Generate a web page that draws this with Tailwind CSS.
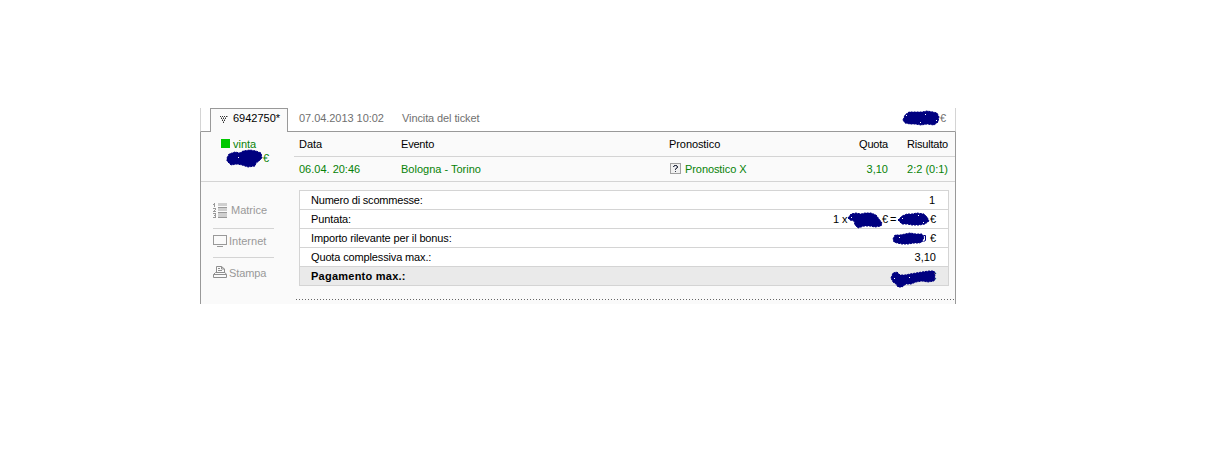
<!DOCTYPE html>
<html lang="it">
<head>
<meta charset="utf-8">
<title>Ticket</title>
<script src="https://cdn.jsdelivr.net/npm/@tailwindcss/browser@4"></script>
</head>
<body class="bg-white font-['Liberation_Sans',Arial,sans-serif] text-[11px] leading-[20px] text-black whitespace-nowrap">
<main class="relative ml-[200px] pt-[108px] w-[756px]">
  <!-- Ticket header -->
  <header class="flex h-[24px]">
    <div class="w-[10px] border-l border-l-[#d4d4d4] border-b border-b-[#999]"></div>
    <div class="flex w-[78px] border border-b-0 border-[#999] bg-[#fafafa] leading-[18px]">
      <svg class="ml-[9px] mt-[7px]" width="8" height="8" shape-rendering="crispEdges" fill="#333"><path d="M0 0h1v1H0zM2 0h1v1H2zM4 0h1v1H4zM6 0h1v1H6zM1 2h1v1H1zM3 2h1v1H3zM5 2h1v1H5zM2 4h1v1H2zM4 4h1v1H4zM3 6h1v1H3z"/><path fill="#999" d="M1 1h1v1H1zM3 1h1v1H3zM5 1h1v1H5zM2 3h1v1H2zM4 3h1v1H4zM3 5h1v1H3zM7 0h1v1H7z"/></svg>
      <span class="ml-[5px]">6942750*</span>
    </div>
    <div class="flex flex-1 border-b border-b-[#999] border-r border-r-[#d4d4d4] text-[#707070]">
      <span class="w-[102px] pl-[11px] tracking-[-0.05px]">07.04.2013 10:02</span>
      <span class="flex-1 pl-[12px] tracking-[-0.1px]">Vincita del ticket</span>
      <span class="pr-[9px]">€</span>
    </div>
  </header>

  <section class="h-[172px] border-x border-[#999] bg-[#fafafa]">
    <div class="flex h-[50px] border-b border-[#d4d4d4] text-[#078207]">
      <div class="w-[93px]">
        <div class="flex h-[24px] pt-[2px] pl-[20px]"><i class="mt-[5px] mr-[3px] block h-[9px] w-[9px] bg-[#00c800]"></i>vinta</div>
        <div class="-mt-[8px] pl-[62px]">€</div>
      </div>
      <div class="flex-1">
        <div class="grid h-[25px] grid-cols-[106px_268px_130px_90px_60px] border-b border-[#d4d4d4] pt-[2px] text-black">
          <span class="pl-[5px]">Data</span><span class="pl-px tracking-[-0.2px]">Evento</span><span class="pl-px tracking-[-0.08px]">Pronostico</span><span class="text-right tracking-[-0.2px]">Quota</span><span class="text-right tracking-[-0.2px]">Risultato</span>
        </div>
        <div class="grid grid-cols-[106px_268px_130px_90px_60px] pt-[2px]">
          <span class="pl-[5px]">06.04. 20:46</span><span class="pl-px">Bologna - Torino</span>
          <span class="flex pl-[2px] tracking-[-0.08px]"><svg class="mt-[4px] mr-[4px]" width="11" height="11" shape-rendering="crispEdges"><path d="M.5.5h10v10H.5z" fill="#f0f0f0" stroke="#a0a0a0"/><path d="M4 2h3v1H4zM3 3h1v1H3zM7 3h1v2H7zM6 5h1v1H6zM5 6h1v1H5zM5 8h1v1H5z" fill="#333b48"/><path d="M4 3h1v1H4zM6 3h1v1H6zM6 4h1v1H6zM5 5h1v1H5z" fill="#99a"/></svg>Pronostico X</span>
          <span class="text-right">3,10</span><span class="text-right">2:2 (0:1)</span>
        </div>
      </div>
    </div>

    <div class="flex">
      <nav class="ml-[12px] w-[61px] pt-[18px] text-[#999]">
        <div class="flex h-[29px] border-b border-[#d4d4d4]">
          <svg class="mt-[3px] mr-[2px]" width="16" height="15" shape-rendering="crispEdges" fill="#999"><path d="M1 0h1v4H1zM0 1h1v1H0zM0 5h3v1H0zM2 6h1v1H2zM1 7h1v1H1zM0 8h3v1H0zM0 10h3v1H0zM1 12h2v1H1zM2 11h1v3H2zM0 14h3v1H0z"/><path d="M5 0h9v3H5zM5 5h9v3H5zM5 10h9v4H5z" fill="#cfcfcf"/><path d="M5 4h9v1H5zM5 9h9v1H5zM5 14h9v1H5z"/></svg>Matrice
        </div>
        <div class="flex h-[29px] border-b border-[#d4d4d4] pt-[2px]">
          <svg class="mt-[4px] mr-[2px]" width="14" height="12" shape-rendering="crispEdges"><rect x=".5" y=".5" width="13" height="9" fill="none" stroke="#999"/><path d="M4 11h6v1H4z" fill="#999"/></svg>Internet
        </div>
        <div class="flex pt-[5px] tracking-[-0.1px]">
          <svg class="mt-[3px] mr-px" width="15" height="12" fill="none" stroke="#8f8f8f"><path d="M3.5 6V.5h5l3 2.5v3M8.5.5V3h3M5 2.5h2M5 4.5h4M2.5 6.5H12l1.5 2v3H.5v-3zM.5 8.5h13"/></svg>Stampa
        </div>
      </nav>
      <div class="ml-[22px] flex-1">
        <div class="mr-[6px] ml-[3px] mt-[8px] border border-[#d4d4d4] bg-white [&>div]:flex [&>div]:justify-between [&>div]:pl-[11px] [&>div]:pr-[12px] [&>div]:leading-[18px] divide-y divide-[#d4d4d4]">
          <div class="h-[19px]"><span class="tracking-[-0.2px]">Numero di scommesse:</span><span class="pr-px">1</span></div>
          <div class="h-[19px]"><span class="tracking-[-0.12px]">Puntata:</span><span class="flex"><span class="w-[49px]">1 x</span><span class="w-[8px]">€</span><span class="w-[40px]">=</span><span>€</span></span></div>
          <div class="h-[19px]"><span class="tracking-[-0.14px]">Importo rilevante per il bonus:</span><span>€</span></div>
          <div class="h-[19px]"><span class="tracking-[-0.14px]">Quota complessiva max.:</span><span>3,10</span></div>
          <div class="h-[18px] bg-[#eaeaea] font-bold"><span class="tracking-[0.24px]">Pagamento max.:</span><span class="font-normal">€</span></div>
        </div>
        <svg class="mt-[13px] block" width="659" height="1" shape-rendering="crispEdges"><path d="M0 .5h659" stroke="#666" stroke-dasharray="1 2"/></svg>
      </div>
    </div>
  </section>

  <!-- Pen marks hiding the amounts -->
  <svg class="absolute left-0 top-0" width="756" height="304" viewBox="200 0 756 304" fill="#000080" stroke="#000080" stroke-width="1" stroke-dasharray="2 1">
    <path d="M903 120l2-5 4-3 6 0 7 0 5-1 6 1 4 1 2 4-1 5-4 3-7-1-6 1-6-1-5 0-5-1z"/>
    <path d="M227 158l2-4 6-2 5 1 3-2 7-1 6 1 5 2 1 5-3 3-3 2-1 3-7 1-6-2-5-1-6 1-4-4z"/>
    <path d="M848 218l3-4 5-1 5 1 4-1 6 0 5 2 3 4 3 4-1 3-6 1-5-1-6 0-6 2-3-3-1-4-4-1z"/>
    <path d="M898 220l4-4 5-2 5 0 5-1 7 1 3 3 2 4-4 3-6 1-7 0-5-1-5 0z"/>
    <path d="M893 239l2-4 5 0 5-1 5-1 6 1 6 0 2 3-2 5-3 1-5 0-6 1-6 0-5-1-3-1z"/>
    <path fill="none" stroke-dasharray="none" d="M923.5 235.500h2v5l-2 1"/>
    <path d="M891 278l2-5 4-1 3 3 5 0 5-1 6-1 6-1 7-1 5 0 1 5-1 5-6 1-6-1-6 1-5 2-5 0-4 3-4 0-2-3-3-2z"/>
    <path fill="#fff" stroke="none" shape-rendering="crispEdges" d="M906 115h1v1h-1zM925 114h1v1h-1zM920 122h1v1h-1zM936 120h1v1h-1zM238 157h1v1h-1zM851 217h1v1h-1zM902 218h1v1h-1zM918 215h1v1h-1zM923 222h1v1h-1zM899 237h1v1h-1zM894 278h1v1h-1zM909 277h1v1h-1z"/>
  </svg>
</main>
</body>
</html>
